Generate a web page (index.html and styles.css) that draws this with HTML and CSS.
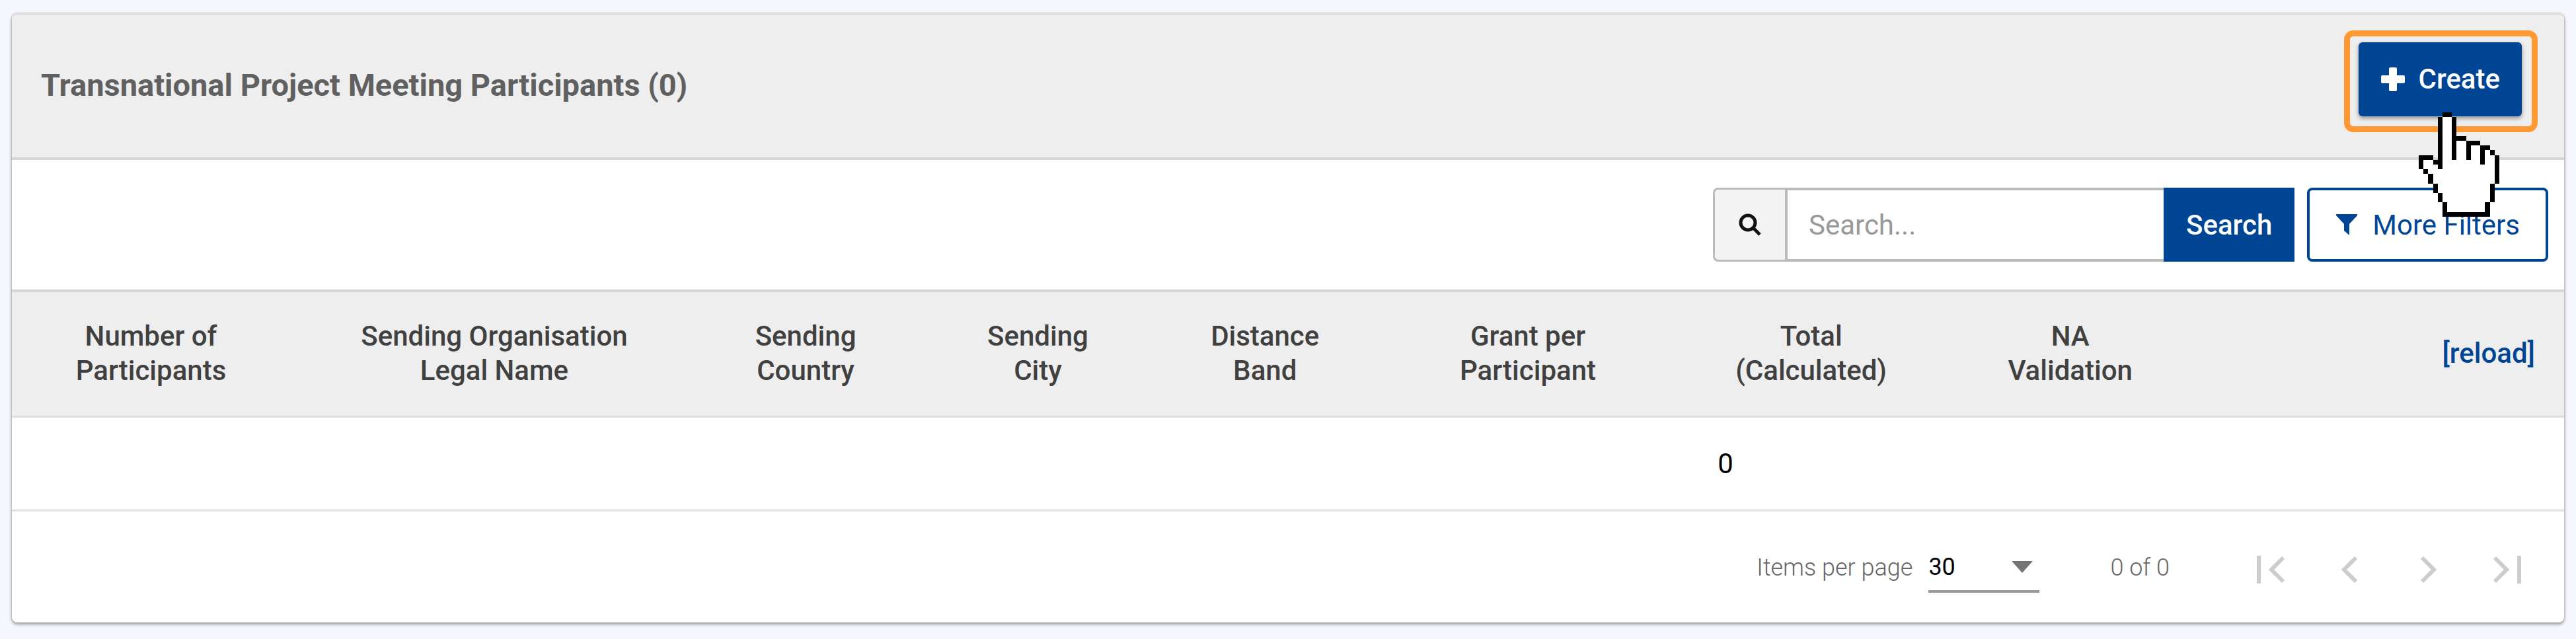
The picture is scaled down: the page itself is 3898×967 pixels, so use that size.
FILE: index.html
```html
<!DOCTYPE html>
<html lang="en">
<head>
  <meta charset="UTF-8">
  <meta name="viewport" content="width=device-width, initial-scale=1.0">
  <title>Transnational Project Meeting Participants</title>
  <link rel="stylesheet" href="styles.css">
</head>
<body>
  <main class="card">
    <header class="card-header">
      <h1 class="title">Transnational Project Meeting Participants (0)</h1>
      <div class="highlight">
        <button class="btn btn-create" type="button">
          <svg class="icon-plus" viewBox="0 0 38 38" aria-hidden="true"><path d="M15 1h8q2 0 2 2v10h10q2 0 2 2v8q0 2-2 2H25v10q0 2-2 2h-8q-2 0-2-2V25H3q-2 0-2-2v-8q0-2 2-2h10V3q0-2 2-2z"/></svg>
          Create
        </button>
        <svg class="cursor" viewBox="0 0 17 22" shape-rendering="crispEdges" aria-hidden="true">
          <path fill="#fff" d="M5 1h2v4h2v1h3v1h2v1h1v1h1v6h-1v4h-1v2H6v-2H5v-2H4v-2H3v-2H2v-1H1v-2h2v1h1V1z"/>
          <path d="M5 0h2v1H5zM4 1h1v11H4zM7 1h1v4h2v1H8v4H7zM10 6h3v1h-2v3h-1zM13 7h2v1h-1v3h-1zM15 8h1v1h-1zM16 9h1v6h-1zM15 15h1v4h-1zM14 19h1v3H5v-3h1v2h8zM0 9h3v1H1v2H0zM3 10h1v1H3zM1 12h1v1H1zM2 13h1v2H2zM3 15h1v2H3zM4 17h1v2H4z"/>
        </svg>
      </div>
    </header>

    <div class="toolbar">
      <form class="search" role="search">
        <label class="search-icon" for="search">
          <svg viewBox="0 0 34 34" role="img" aria-label="Search"><circle cx="14" cy="14" r="11"/><path d="M22 22l10 10"/></svg>
        </label>
        <input class="search-input" id="search" type="text" placeholder="Search...">
        <button class="btn btn-search" type="button">Search</button>
      </form>
      <button class="btn btn-filters" type="button">
        <svg class="icon-filter" viewBox="0 0 34 34" aria-hidden="true"><path d="M1 1h32v2L21 16v17l-8-7V16L1 3z"/></svg>
        More Filters
      </button>
    </div>

    <table class="grid">
      <colgroup>
        <col class="col-number">
        <col class="col-name">
        <col class="col-country">
        <col class="col-city">
        <col class="col-band">
        <col class="col-grant">
        <col class="col-total">
        <col class="col-na">
        <col>
      </colgroup>
      <thead>
        <tr>
          <th>Number of<br>Participants</th>
          <th>Sending Organisation<br>Legal Name</th>
          <th>Sending<br>Country</th>
          <th>Sending<br>City</th>
          <th>Distance<br>Band</th>
          <th>Grant per<br>Participant</th>
          <th>Total<br>(Calculated)</th>
          <th>NA<br>Validation</th>
          <th class="actions"><a class="reload" href="#">[reload]</a></th>
        </tr>
      </thead>
      <tbody>
        <tr>
          <td></td>
          <td></td>
          <td></td>
          <td></td>
          <td></td>
          <td></td>
          <td>0</td>
          <td></td>
          <td></td>
        </tr>
      </tbody>
    </table>

    <footer class="paginator">
      <label class="page-label" for="page-size">Items per page</label>
      <div class="page-size">
        <select class="page-select" id="page-size">
          <option>30</option>
        </select>
        <svg class="icon-arrow" viewBox="0 0 32 18" aria-hidden="true"><path d="M0 0h32L16 18z"/></svg>
      </div>
      <span class="range">0 of 0</span>
      <nav class="pages">
        <button class="page-btn" type="button" aria-label="First page" disabled><svg viewBox="0 0 48 48"><path d="M6 3v42M43 6L25 24l18 18"/></svg></button>
        <button class="page-btn" type="button" aria-label="Previous page" disabled><svg viewBox="0 0 48 48"><path d="M34 6L16 24l18 18"/></svg></button>
        <button class="page-btn" type="button" aria-label="Next page" disabled><svg viewBox="0 0 48 48"><path d="M15 6l18 18-18 18"/></svg></button>
        <button class="page-btn" type="button" aria-label="Last page" disabled><svg viewBox="0 0 48 48"><path d="M6 6l18 18L6 42M43 3v42"/></svg></button>
      </nav>
    </footer>
  </main>
</body>
</html>
```
FILE: styles.css
```css
* {
  box-sizing: border-box;
}

body {
  margin: 0;
  padding: 20px 18px 26px;
  background: #f5f7fc;
  font-family: Roboto, "Liberation Sans", sans-serif;
  font-size: 42px;
  color: #000;
}

button,
input,
select {
  font: inherit;
}

/* Card */
.card {
  background: #fff;
  border-radius: 8px;
  box-shadow: 0 0 3px rgba(0, 0, 0, 0.25), 0 3px 5px rgba(0, 0, 0, 0.35);
}

.card-header {
  display: flex;
  align-items: center;
  justify-content: space-between;
  height: 222px;
  padding: 0 40px 0 44px;
  background: #eee;
  border-top: 3px solid #e0e0e0;
  border-bottom: 4px solid #d5d5d5;
  border-radius: 8px 8px 0 0;
}

.title {
  margin: 0;
  padding-bottom: 4px;
  font-size: 47px;
  font-weight: bold;
  color: #606060;
}

.btn {
  display: flex;
  align-items: center;
  justify-content: center;
  height: 112px;
  border: none;
  cursor: pointer;
}

/* Create button with its highlight frame */
.highlight {
  position: relative;
  margin-bottom: 16px;
  padding: 9px 15px 15px 13px;
  border: 9px solid #ff9933;
  border-radius: 14px;
}

.btn-create {
  gap: 20px;
  padding: 0 33px;
  background: #004494;
  border-radius: 6px;
  color: #fff;
  font-weight: 500;
  box-shadow: 0 3px 6px rgba(0, 0, 0, 0.4);
}

.icon-plus {
  width: 38px;
  height: 38px;
  fill: #fff;
}

.cursor {
  position: absolute;
  left: 104px;
  top: 115px;
  width: 122px;
  height: 158px;
  z-index: 2;
}

/* Toolbar */
.toolbar {
  display: flex;
  align-items: center;
  justify-content: flex-end;
  gap: 19px;
  height: 196px;
  padding: 0 24px;
}

.search {
  display: flex;
}

.search-icon {
  display: flex;
  align-items: center;
  justify-content: center;
  width: 109px;
  height: 112px;
  background: #f4f4f4;
  border: 3px solid #bbb;
  border-right: none;
  border-radius: 8px 0 0 8px;
}

.search-icon svg {
  width: 34px;
  height: 34px;
  fill: none;
  stroke: #111;
  stroke-width: 5;
}

.search-input {
  width: 573px;
  height: 112px;
  padding: 0 32px;
  border: 4px solid #bbb;
  border-right: none;
  background: #fff;
}

.search-input::placeholder {
  color: #999;
  opacity: 1;
}

.btn-search {
  padding: 0 34px;
  background: #004494;
  color: #fff;
  font-weight: 500;
}

.btn-filters {
  gap: 22px;
  padding: 0 39px;
  background: #fff;
  border: 4px solid #004494;
  border-radius: 8px;
  color: #004494;
}

.icon-filter {
  width: 34px;
  height: 34px;
  fill: #004494;
}

/* Table */
.grid {
  width: 100%;
  table-layout: fixed;
  border-collapse: collapse;
  border-top: 4px solid #d5d5d5;
}

.col-number { width: 10.9%; }
.col-name { width: 16%; }
.col-country { width: 8.4%; }
.col-city { width: 9.8%; }
.col-band { width: 8%; }
.col-grant { width: 12.6%; }
.col-total { width: 9.6%; }
.col-na { width: 10.7%; }

.grid th {
  height: 190px;
  padding: 0;
  background: #eee;
  border-bottom: 3px solid #e0e0e0;
  color: #404040;
  font-weight: 500;
  line-height: 52px;
}

.grid td {
  height: 142px;
  padding: 0 44px;
  border-bottom: 3px solid #e0e0e0;
}

.grid .actions {
  padding-right: 44px;
  text-align: right;
}

.reload {
  color: #004494;
  text-decoration: none;
}

/* Paginator */
.paginator {
  display: flex;
  align-items: center;
  justify-content: flex-end;
  height: 168px;
  padding: 8px 63px 0 0;
  font-size: 36px;
  color: #666;
}

.page-label,
.range {
  padding-bottom: 6px;
  font-weight: 300;
}

.page-size {
  display: flex;
  align-items: center;
  width: 168px;
  height: 70px;
  margin: 0 107px 0 24px;
  padding-bottom: 4px;
  border-bottom: 4px solid #999;
}

.page-select {
  flex: 1;
  min-width: 0;
  appearance: none;
  padding: 0;
  border: none;
  background: none;
  color: #000;
}

.icon-arrow {
  width: 32px;
  height: 18px;
  margin-right: 10px;
  fill: #757575;
}

.pages {
  display: flex;
  gap: 71px;
  margin-left: 129px;
}

.page-btn {
  width: 48px;
  height: 48px;
  padding: 0;
  border: none;
  background: none;
}

.page-btn svg {
  display: block;
  fill: none;
  stroke: #ccc;
  stroke-width: 6;
}
```
